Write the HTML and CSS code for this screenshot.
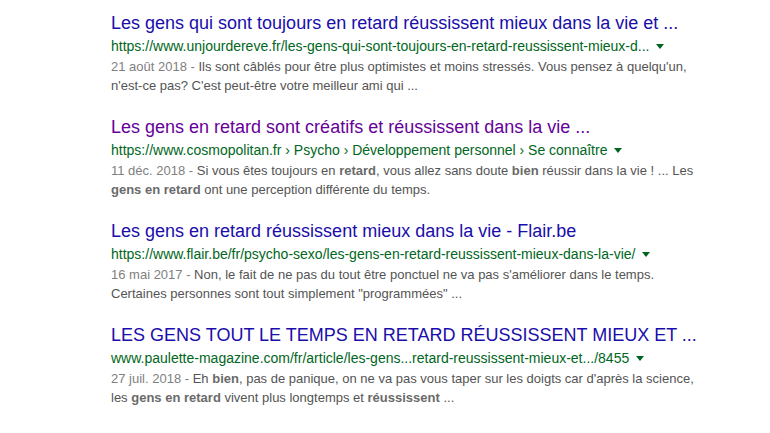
FILE: index.html
```html
<!DOCTYPE html>
<html lang="fr">
<head>
<meta charset="utf-8">
<title>Résultats</title>
<link rel="stylesheet" href="styles.css">
</head>
<body>
<div class="results">
  <div class="result">
    <a class="title" href="#">Les gens qui sont toujours en retard réussissent mieux dans la vie et ...</a>
    <div class="url"><cite>https://www.unjourdereve.fr/les-gens-qui-sont-toujours-en-retard-reussissent-mieux-d...</cite><span class="arrow"></span></div>
    <div class="snippet"><span class="date">21 août 2018 - </span>Ils sont câblés pour être plus optimistes et moins stressés. Vous pensez à quelqu'un,<br>n'est-ce pas? C'est peut-être votre meilleur ami qui ...</div>
  </div>
  <div class="result">
    <a class="title visited" href="#">Les gens en retard sont créatifs et réussissent dans la vie ...</a>
    <div class="url"><cite>https://www.cosmopolitan.fr › Psycho › Développement personnel › Se connaître</cite><span class="arrow"></span></div>
    <div class="snippet"><span class="date">11 déc. 2018 - </span>Si vous êtes toujours en <b>retard</b>, vous allez sans doute <b>bien</b> réussir dans la vie ! ... Les<br><b>gens en retard</b> ont une perception différente du temps.</div>
  </div>
  <div class="result">
    <a class="title" href="#">Les gens en retard réussissent mieux dans la vie - Flair.be</a>
    <div class="url"><cite>https://www.flair.be/fr/psycho-sexo/les-gens-en-retard-reussissent-mieux-dans-la-vie/</cite><span class="arrow"></span></div>
    <div class="snippet"><span class="date">16 mai 2017 - </span>Non, le fait de ne pas du tout être ponctuel ne va pas s'améliorer dans le temps.<br>Certaines personnes sont tout simplement "programmées" ...</div>
  </div>
  <div class="result">
    <a class="title" href="#">LES GENS TOUT LE TEMPS EN RETARD RÉUSSISSENT MIEUX ET ...</a>
    <div class="url"><cite>www.paulette-magazine.com/fr/article/les-gens...retard-reussissent-mieux-et.../8455</cite><span class="arrow"></span></div>
    <div class="snippet"><span class="date">27 juil. 2018 - </span>Eh <b>bien</b>, pas de panique, on ne va pas vous taper sur les doigts car d'après la science,<br>les <b>gens en retard</b> vivent plus longtemps et <b>réussissent</b> ...</div>
  </div>
</div>
</body>
</html>
```
FILE: styles.css
```css
html, body {
  margin: 0;
  padding: 0;
  background: #ffffff;
}
body {
  font-family: "Liberation Sans", Arial, sans-serif;
}
.results {
  padding: 11px 0 0 111px;
  display: flex;
  flex-direction: column;
  gap: 20px;
}
.result {
  display: flex;
  flex-direction: column;
}
.title {
  font-size: 18px;
  line-height: 24px;
  color: #1a0dab;
  text-decoration: none;
  white-space: nowrap;
}
.title.visited {
  color: #660099;
}
.url {
  display: flex;
  align-items: center;
  height: 22px;
  white-space: nowrap;
}
.url cite {
  font-style: normal;
  font-size: 14px;
  color: #006621;
}
.arrow {
  display: inline-block;
  margin-left: 7px;
  margin-top: 1px;
  width: 0;
  height: 0;
  border-left: 4px solid transparent;
  border-right: 4px solid transparent;
  border-top: 5px solid #006621;
}
.snippet {
  margin-top: 1px;
  font-size: 13px;
  line-height: 18.5px;
  color: #545454;
  white-space: nowrap;
}
.snippet .date {
  color: #808080;
}
.snippet b {
  color: #6a6a6a;
}
```
